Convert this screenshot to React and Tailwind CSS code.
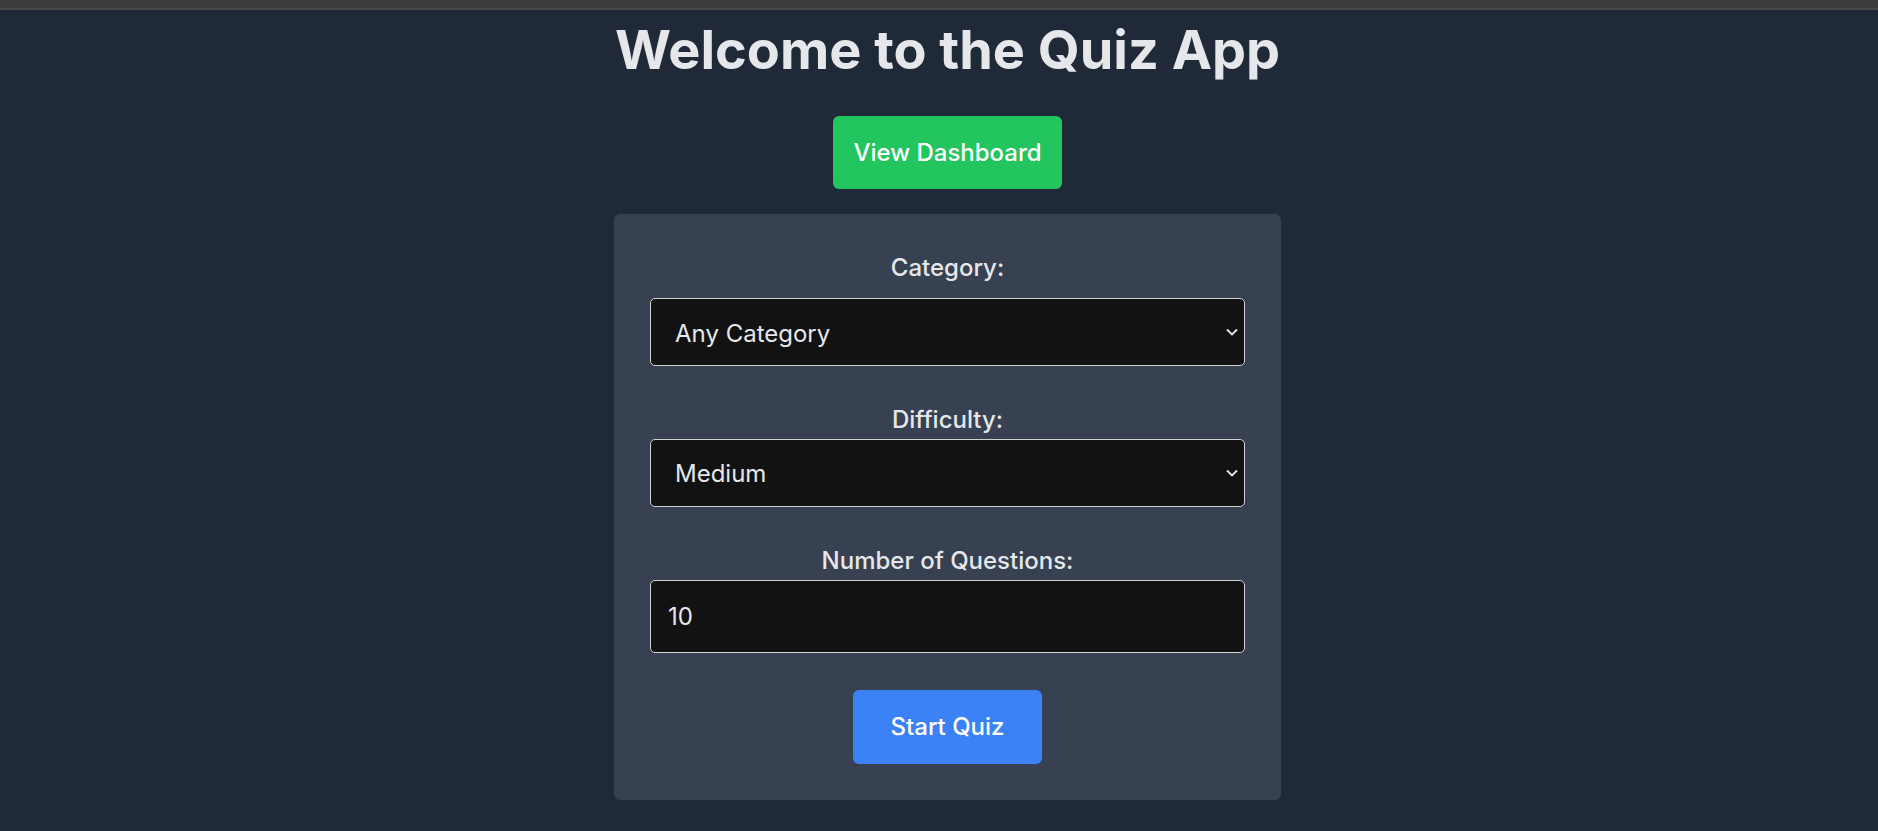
import React, { useState } from "react";

const Chevron = () => (
  <svg
    className="pointer-events-none absolute right-[7px] top-1/2 -translate-y-1/2"
    width="12"
    height="8"
    viewBox="0 0 12 8"
    fill="none"
  >
    <path d="M1 1.5L6 6.5L11 1.5" stroke="#e5e7eb" strokeWidth="1.8" />
  </svg>
);

const App = () => {
  const [category, setCategory] = useState("any");
  const [difficulty, setDifficulty] = useState("medium");
  const [amount, setAmount] = useState(10);

  return (
    <div className="min-h-screen bg-[#1f2937] font-['Inter',sans-serif]">
      <div className="h-[8px] bg-[#3c3c3c]" />
      <div className="h-[2px] bg-[#474747]" />
      <div className="flex flex-col items-center pl-[17px] pt-[13px]">
        <h1 className="text-[54px] leading-[54px] font-bold text-[#e5e7eb]">
          Welcome to the Quiz App
        </h1>
        <button className="mt-[39px] h-[73px] px-5 rounded-md bg-[#22c55e] text-white text-[24px] font-medium">
          View Dashboard
        </button>

        <div className="mt-[25px] w-[667px] rounded-md bg-[#374151] p-[36px] flex flex-col">
          <label className="text-center text-[24px] leading-[36px] font-medium text-[#e5e7eb]">
            Category:
          </label>
          <div className="relative mt-[12px]">
            <select
              value={category}
              onChange={(e) => setCategory(e.target.value)}
              className="appearance-none w-full h-[68px] pl-[24px] pt-[3px] rounded-[5px] border border-[#d1d1d1] bg-[#121212] text-[24px] text-[#e5e7eb] outline-none"
            >
              <option value="any">Any Category</option>
              <option value="9">General Knowledge</option>
              <option value="17">Science &amp; Nature</option>
            </select>
            <Chevron />
          </div>

          <label className="mt-[36px] text-center text-[24px] leading-[36px] font-medium text-[#e5e7eb]">
            Difficulty:
          </label>
          <div className="relative mt-[1px]">
            <select
              value={difficulty}
              onChange={(e) => setDifficulty(e.target.value)}
              className="appearance-none w-full h-[68px] pl-[24px] pt-[2px] rounded-[5px] border border-[#d1d1d1] bg-[#121212] text-[24px] text-[#e5e7eb] outline-none"
            >
              <option value="easy">Easy</option>
              <option value="medium">Medium</option>
              <option value="hard">Hard</option>
            </select>
            <Chevron />
          </div>

          <label className="mt-[36px] text-center text-[24px] leading-[36px] font-medium text-[#e5e7eb]">
            Number of Questions:
          </label>
          <input
            type="text"
            value={amount}
            onChange={(e) => setAmount(e.target.value)}
            className="mt-[1px] w-full h-[73px] pl-[17px] rounded-[5px] border border-[#d1d1d1] bg-[#121212] text-[24px] text-[#e5e7eb] outline-none"
          />

          <button className="mt-[37px] self-center h-[74px] w-[189px] rounded-md bg-[#3b82f6] text-white text-[24px] font-medium">
            Start Quiz
          </button>
        </div>
      </div>
    </div>
  );
};

export default App;
